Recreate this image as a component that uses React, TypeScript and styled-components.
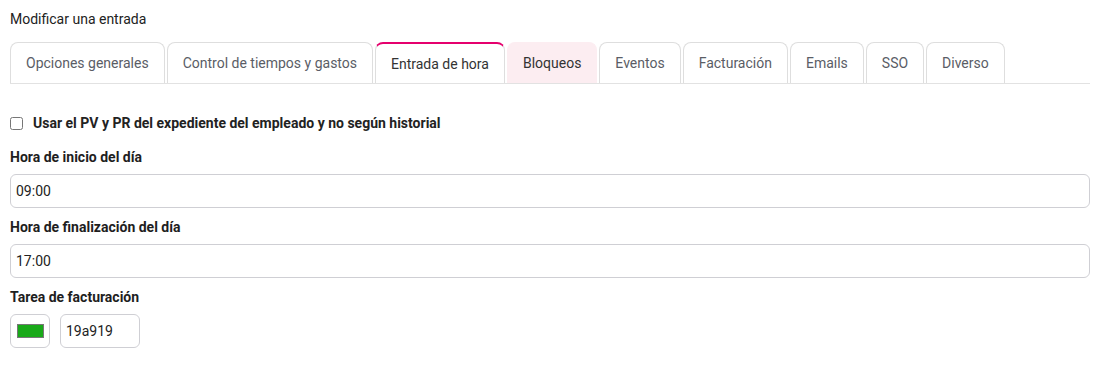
import React, { useState } from "react";
import styled, { createGlobalStyle, css } from "styled-components";

const GlobalStyle = createGlobalStyle`
  body {
    margin: 0;
    background: #fff;
    font-family: Roboto, "Liberation Sans", Arial, sans-serif;
    color: #222;
  }
`;

const tabs = [
  "Opciones generales",
  "Control de tiempos y gastos",
  "Entrada de hora",
  "Bloqueos",
  "Eventos",
  "Facturación",
  "Emails",
  "SSO",
  "Diverso",
];

const App: React.FC = () => {
  const [active, setActive] = useState("Entrada de hora");
  const hovered = "Bloqueos";
  const [color, setColor] = useState("19a919");

  return (
    <Page>
      <GlobalStyle />
      <Title>Modificar una entrada</Title>
      <TabStrip>
        {tabs.map((t) => (
          <Tab
            key={t}
            $active={t === active}
            $hover={t === hovered && t !== active}
            onClick={() => setActive(t)}
          >
            {t}
          </Tab>
        ))}
      </TabStrip>

      <Form>
        <CheckRow>
          <Check type="checkbox" id="pv-pr" />
          <CheckLabel htmlFor="pv-pr">
            Usar el PV y PR del expediente del empleado y no según historial
          </CheckLabel>
        </CheckRow>

        <Field>
          <Label>Hora de inicio del día</Label>
          <TextInput defaultValue="09:00" />
        </Field>

        <Field>
          <Label>Hora de finalización del día</Label>
          <TextInput defaultValue="17:00" />
        </Field>

        <Field>
          <Label>Tarea de facturación</Label>
          <ColorRow>
            <ColorBox>
              <Swatch style={{ background: "#" + color }} />
            </ColorBox>
            <HexInput value={color} onChange={(e) => setColor(e.target.value)} />
          </ColorRow>
        </Field>
      </Form>
    </Page>
  );
};

export default App;

const Page = styled.div`
  padding: 10px;
`;

const Title = styled.div`
  font-size: 14px;
  line-height: 18px;
  color: #222;
`;

const TabStrip = styled.div`
  display: flex;
  gap: 2px;
  margin-top: 14px;
  border-bottom: 1px solid #e2e2e2;
`;

const Tab = styled.div<{ $active?: boolean; $hover?: boolean }>`
  height: 41px;
  line-height: 41px;
  padding: 0 15px;
  font-size: 14px;
  color: #5a5d66;
  border: 1px solid #dedede;
  border-bottom: none;
  border-radius: 8px 8px 0 0;
  box-sizing: border-box;
  cursor: pointer;
  white-space: nowrap;

  ${({ $active }) =>
    $active &&
    css`
      color: #333;
      border-top: 2px solid #e5006d;
      line-height: 40px;
      background: #fff;
    `}

  ${({ $hover }) =>
    $hover &&
    css`
      color: #333;
      background: #fcedf1;
      border-color: #fcedf1;
    `}
`;

const Form = styled.div`
  padding-top: 30px;
  display: flex;
  flex-direction: column;
  gap: 10px;
`;

const CheckRow = styled.div`
  display: flex;
  align-items: center;
  gap: 10px;
  margin-bottom: 6px;
`;

const Check = styled.input`
  margin: 0;
  width: 13px;
  height: 13px;
`;

const CheckLabel = styled.label`
  font-size: 14px;
  line-height: 18px;
  font-weight: 700;
  color: #222;
`;

const Field = styled.div`
  display: flex;
  flex-direction: column;
  gap: 8px;
`;

const Label = styled.div`
  font-size: 14px;
  line-height: 18px;
  font-weight: 700;
  color: #1e1e1e;
`;

const TextInput = styled.input`
  height: 34px;
  box-sizing: border-box;
  border: 1px solid #cfcfd4;
  border-radius: 6px;
  padding: 0 5px;
  font-family: inherit;
  font-size: 14px;
  color: #222;
  outline: none;
`;

const ColorRow = styled.div`
  display: flex;
  gap: 10px;
`;

const ColorBox = styled.div`
  width: 40px;
  height: 34px;
  box-sizing: border-box;
  border: 1px solid #cfcfd4;
  border-radius: 6px;
  display: flex;
  align-items: center;
  justify-content: center;
`;

const Swatch = styled.div`
  width: 27px;
  height: 14px;
  box-sizing: border-box;
  border: 1px solid #777;
`;

const HexInput = styled(TextInput)`
  width: 80px;
`;
